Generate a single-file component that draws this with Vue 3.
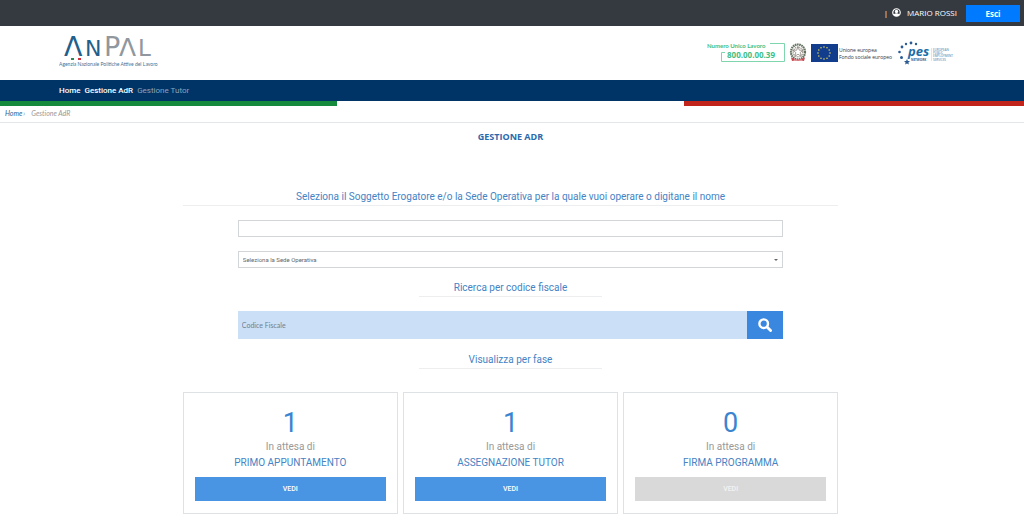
<script setup>
import { ref } from 'vue'

const soggetto = ref('')
const sede = ref('')
const codice = ref('')

const phases = [
  { count: 1, label: 'PRIMO APPUNTAMENTO' },
  { count: 1, label: 'ASSEGNAZIONE TUTOR' },
  { count: 0, label: 'FIRMA PROGRAMMA' }
]

const ring = (n, cx, cy, r) =>
  Array.from({ length: n }, (_, i) => {
    const a = (i / n) * Math.PI * 2
    return { x: cx + r * Math.sin(a), y: cy - r * Math.cos(a) }
  })

const euStars = ring(12, 13, 9, 6)
</script>

<template>
  <div class="page">
    <div class="topbar">
      <span class="divider">|</span>
      <svg class="user-icon" width="9" height="9" viewBox="0 0 18 18" aria-hidden="true">
        <circle cx="9" cy="9" r="7.5" fill="none" stroke="#fff" stroke-width="2.4" />
        <circle cx="9" cy="7" r="3.3" fill="#fff" />
        <path d="M3 13q6-5 12 0l-2 3H5z" fill="#fff" />
      </svg>
      <span class="user-name">MARIO ROSSI</span>
      <button class="logout" type="button">Esci</button>
    </div>

    <header class="brand">
      <svg class="anpal" width="110" height="48" viewBox="0 -6 110 48" role="img" aria-label="ANPAL">
        <g font-family="'DejaVu Sans', sans-serif">
          <text x="5" y="21" font-size="27" fill="#215f8c">Λ</text>
          <text x="26" y="21" font-size="22" fill="#215f8c">N</text>
          <text x="45" y="21" font-size="27" fill="#90979e">P</text>
          <text x="60" y="21" font-size="25" fill="#90979e">Λ</text>
          <text x="79" y="21" font-size="23" fill="#90979e">L</text>
        </g>
        <rect x="12" y="23" width="3" height="2" fill="#2b8a50" />
        <rect x="19" y="23" width="3" height="2" fill="#d3323c" />
        <text x="0" y="31" font-family="Lato, sans-serif" font-size="5" fill="#4a7194">Agenzia Nazionale Politiche Attive del Lavoro</text>
      </svg>

      <div class="partners">
        <svg width="78" height="22" viewBox="0 0 78 22" role="img" aria-label="Numero Unico Lavoro 800.00.00.39">
          <text x="0" y="6" font-family="Lato, sans-serif" font-weight="700" font-size="6" fill="#3dc085">Numero Unico Lavoro</text>
          <text x="20" y="16" font-family="'Open Sans', sans-serif" font-weight="700" font-size="8" fill="#3dc085">800.00.00.39</text>
          <path d="M18 10.500H14.500V19.500H77.500V1.500H63" fill="none" stroke="#7fd5ae" />
        </svg>

        <svg class="emblem" width="18" height="20" viewBox="0 0 18 20" aria-hidden="true">
          <ellipse cx="9" cy="9" rx="7" ry="7.500" fill="none" stroke="#64715f" stroke-width="2.200" stroke-dasharray="1.600 .6" />
          <circle cx="9" cy="9" r="4.800" fill="none" stroke="#a9a39b" stroke-width="1.500" stroke-dasharray="1.200 .7" />
          <path d="M9 3.500l1.300 3.700h4l-3.200 2.400 1.200 3.800L9 11.200l-3.300 2.200 1.200-3.800-3.200-2.400h4z" fill="#fff" stroke="#81766f" stroke-width=".7" />
          <path d="M2 14.500l3 1q4 1.800 8 0l3-1-1 3.500-3-.5q-3 1-6 0l-3 .5z" fill="#c64a52" />
          <path d="M5.500 16.700q3.500 1.200 7 0" fill="none" stroke="#fff" stroke-width=".7" stroke-dasharray="1 .5" />
        </svg>

        <svg class="eu" width="84" height="18" viewBox="0 0 84 18" role="img" aria-label="Unione europea Fondo sociale europeo">
          <rect width="27" height="18" fill="#123c8c" />
          <circle v-for="(s, i) in euStars" :key="i" :cx="s.x" :cy="s.y" r=".8" fill="#d9cf5c" />
          <g font-family="'Open Sans', sans-serif" font-size="5" font-weight="500" fill="#30343b">
            <text x="28" y="8">Unione europea</text>
            <text x="28" y="15">Fondo sociale europeo</text>
          </g>
        </svg>

        <svg class="pes" width="58" height="24" viewBox="0 0 58 24" role="img" aria-label="pes network">
          <g fill="#2a5c93">
            <circle cx="8" cy="3" r="1.200" />
            <circle cx="13" cy="2" r="1.400" />
            <circle cx="18" cy="3" r="1.200" />
            <circle cx="4" cy="6" r="1.400" />
            <circle cx="1.500" cy="11" r="1.300" />
            <circle cx="3.500" cy="16.500" r="1.500" />
            <path d="M9 18l.9 1.900 2.100.2-1.600 1.400.5 2.100-1.900-1.100-1.900 1.100.5-2.100L6 20.100l2.100-.2z" />
          </g>
          <g font-family="'Open Sans', sans-serif" font-weight="700">
            <text x="10" y="15" font-size="13" font-style="italic" fill="#1d6fa8">pes</text>
            <text x="13" y="20" font-size="3" fill="#2a5c93">NETWORK</text>
            <g font-size="3" font-weight="400" fill="#4278a8">
              <text x="35" y="10">EUROPEAN</text>
              <text x="35" y="13">PUBLIC</text>
              <text x="35" y="16">EMPLOYMENT</text>
              <text x="35" y="20">SERVICES</text>
            </g>
          </g>
          <path d="M33.500 7v13" stroke="#b9cddd" stroke-width=".5" />
        </svg>
      </div>
    </header>

    <nav class="menu" aria-label="Principale">
      <a href="#home">Home</a>
      <a href="#adr">Gestione AdR</a>
      <a href="#tutor" class="muted">Gestione Tutor</a>
    </nav>
    <div class="tricolor"><i class="green"></i><i class="white"></i><i class="red"></i></div>

    <nav class="crumbs" aria-label="Percorso">
      <a href="#home">Home</a><span class="sep">›</span><span class="current">Gestione AdR</span>
    </nav>

    <main class="content">
      <div class="column">
        <h1>GESTIONE ADR</h1>

        <h2 class="wide"><label for="soggetto">Seleziona il Soggetto Erogatore e/o la Sede Operativa per la quale vuoi operare o digitane il nome</label></h2>
        <div class="fields">
          <input id="soggetto" v-model="soggetto" class="box" type="text">
          <div class="select-wrap">
            <select v-model="sede" class="box" aria-label="Sede Operativa">
              <option value="">Seleziona la Sede Operativa</option>
            </select>
          </div>
        </div>

        <h2><label for="codice">Ricerca per codice fiscale</label></h2>
        <form class="fields search" @submit.prevent>
          <input id="codice" v-model="codice" type="text" placeholder="Codice Fiscale">
          <button type="submit" aria-label="Cerca">
            <svg width="14" height="14" viewBox="0 0 14 14" aria-hidden="true">
              <circle cx="5.700" cy="5.700" r="4.300" fill="none" stroke="#fff" stroke-width="2.400" />
              <path d="M9 9l3.600 3.600" stroke="#fff" stroke-width="2.800" stroke-linecap="round" />
            </svg>
          </button>
        </form>

        <h2>Visualizza per fase</h2>
        <section class="cards">
          <article v-for="p in phases" :key="p.label" class="card">
            <div class="count">{{ p.count }}</div>
            <div class="wait">In attesa di</div>
            <div class="phase">{{ p.label }}</div>
            <button type="button" :disabled="p.count === 0">VEDI</button>
          </article>
        </section>
      </div>
    </main>
  </div>
</template>

<style>
body {
  margin: 0;
  background: #fff;
}
</style>

<style scoped>
.page {
  font-family: Roboto, "Liberation Sans", sans-serif;
  font-size: 8px;
  color: #5b8fc7;
}
.page * {
  box-sizing: border-box;
}
svg {
  display: block;
  flex: none;
}
a {
  text-decoration: none;
}
button,
input,
select {
  font-family: inherit;
  margin: 0;
  border: 0;
  border-radius: 0;
}
.topbar {
  display: flex;
  align-items: center;
  justify-content: flex-end;
  height: 26px;
  padding-right: 4px;
  background: #343a40;
  color: #fff;
  font-family: "Open Sans", sans-serif;
}
.topbar span {
  line-height: 12px;
  padding-bottom: 1px;
}
.user-icon {
  margin: 0 6px 2px 4px;
}
.logout {
  width: 54px;
  height: 17px;
  margin-left: 9px;
  padding: 0;
  background: #007bff;
  color: #fff;
  font-size: 8px;
  font-weight: 700;
}
.brand {
  display: flex;
  align-items: center;
  justify-content: space-between;
  height: 54px;
  padding: 0 68px 0 59px;
}
.partners {
  display: flex;
  align-items: center;
}
.emblem {
  margin: 0 4px;
}
.pes {
  margin-left: 3px;
}
.menu {
  display: flex;
  align-items: center;
  gap: 4px;
  height: 21px;
  padding-left: 59px;
  background: #003366;
}
.menu a {
  color: #fff;
  font-weight: 500;
}
.menu a.muted {
  color: #8da3ba;
  font-weight: 400;
}
.tricolor {
  display: flex;
  height: 5px;
}
.tricolor i {
  flex: 1;
}
.tricolor .green {
  background: #158a3c;
}
.tricolor .white {
  flex: 1.03;
}
.tricolor .red {
  flex: 1.01;
  background: #c1241b;
}
.crumbs {
  display: flex;
  align-items: center;
  height: 17px;
  padding: 0 5px 2px;
  border-bottom: 1px solid #e4e7ea;
  font-family: Lato, sans-serif;
  font-size: 7px;
  font-style: italic;
  font-variant-ligatures: none;
}
.crumbs a {
  color: #2c6296;
}
.sep {
  margin: 0 6px 0 1px;
}
.current {
  color: #999;
}
.content {
  padding: 8px 3px 0 0;
}
.column {
  width: 64.2%;
  margin: 0 auto;
}
h1 {
  margin: 0 0 47px;
  font-family: "Open Sans", sans-serif;
  font-size: 9px;
  line-height: 12px;
  font-weight: 700;
  text-align: center;
  color: #2a69ac;
}
h2 {
  width: 28%;
  margin: 0 auto 14px;
  border-bottom: 1px solid #eceef0;
  font-size: 10px;
  line-height: 14px;
  padding-bottom: 1px;
  font-weight: 400;
  text-align: center;
  white-space: nowrap;
  color: #4583c4;
}
h2.wide {
  width: 100%;
}
.fields {
  width: 83.2%;
  margin: 0 auto;
}
.box {
  display: block;
  width: 100%;
  height: 17px;
  padding: 0 4px;
  border: 1px solid #d3d6d9;
  background: #fff;
  color: #666;
  font-size: 6px;
  appearance: none;
}
.select-wrap {
  position: relative;
  margin: 14px 0 13px;
}
.select-wrap::after {
  content: "";
  position: absolute;
  right: 5px;
  top: 8px;
  border: 2px solid transparent;
  border-top-color: #666;
  border-bottom: 0;
}
.search {
  display: flex;
  margin-bottom: 14px;
}
.search input {
  flex: 1;
  height: 28px;
  padding: 0 4px;
  background: #cbe0f6;
  color: #456;
  font-family: Lato, sans-serif;
  font-size: 7px;
}
.search input::placeholder {
  color: #6c7f94;
  opacity: 1;
}
.search button {
  display: flex;
  align-items: center;
  justify-content: center;
  width: 36px;
  padding: 0;
  background: #3a87e0;
}
.cards {
  display: grid;
  grid-template-columns: repeat(3, 1fr);
  gap: 5px;
  margin-top: 23px;
}
.card {
  padding: 14px 11px 12px;
  border: 1px solid #dfe2e5;
  text-align: center;
}
.count {
  font-size: 27px;
  line-height: 32px;
  color: #3a84d0;
}
.wait,
.phase {
  font-size: 10px;
  line-height: 16px;
}
.wait {
  color: #999;
}
.phase {
  color: #4583c4;
}
.card button {
  display: block;
  width: 100%;
  height: 24px;
  margin-top: 6px;
  padding: 0;
  background: #4a95e3;
  color: #fff;
  font-size: 7px;
  font-weight: 500;
}
.card button:disabled {
  background: #d9d9d9;
  color: #f3f3f3;
}
</style>
